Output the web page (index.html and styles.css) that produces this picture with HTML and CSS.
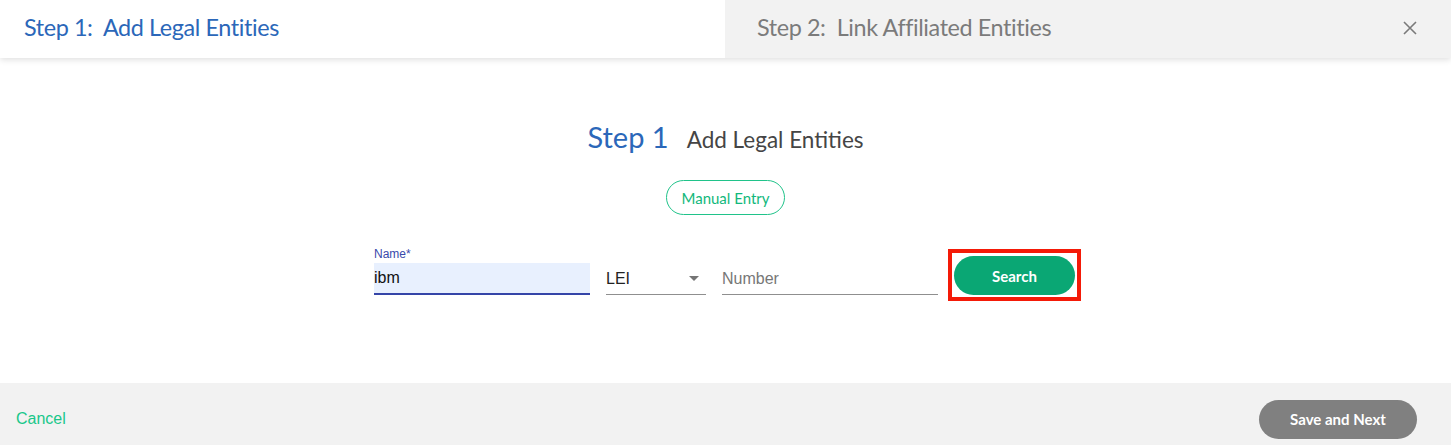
FILE: index.html
```html
<!DOCTYPE html>
<html>
<head>
<meta charset="utf-8">
<link rel="stylesheet" href="styles.css">
</head>
<body>
<div class="modal">
  <header class="tabs">
    <div class="tab tab-active">Step 1:&nbsp; Add Legal Entities</div>
    <div class="tab tab-inactive">
      <span>Step 2:&nbsp; Link Affiliated Entities</span>
      <svg class="close" width="16" height="16" viewBox="0 0 16 16"><path d="M2 2 L14 14 M14 2 L2 14" stroke="#7a7a7a" stroke-width="1.6" fill="none"/></svg>
    </div>
  </header>
  <main class="content">
    <h1 class="title"><span class="step">Step 1</span><span class="sub">Add Legal Entities</span></h1>
    <button class="manual">Manual Entry</button>
    <div class="form">
      <div class="field name-field">
        <label class="label">Name*</label>
        <div class="input filled">ibm</div>
      </div>
      <div class="field select-field">
        <div class="input select">LEI
          <svg class="caret" width="10" height="5" viewBox="0 0 10 5"><path d="M0 0 L10 0 L5 5 Z" fill="#757575"/></svg>
        </div>
      </div>
      <div class="field number-field">
        <div class="input placeholder">Number</div>
      </div>
      <div class="highlight">
        <button class="search">Search</button>
      </div>
    </div>
  </main>
  <footer class="footer">
    <a class="cancel">Cancel</a>
    <button class="save">Save and Next</button>
  </footer>
</div>
</body>
</html>
```
FILE: styles.css
```css
* { box-sizing: border-box; }
html, body { margin: 0; padding: 0; background: #fff; }
body { width: 1451px; height: 445px; overflow: hidden; font-family: "Lato", "Open Sans", sans-serif; }
.modal { display: flex; flex-direction: column; height: 445px; }
.tabs { display: flex; height: 58px; box-shadow: 0 2px 6px rgba(0,0,0,0.12); position: relative; z-index: 1; }
.tab { display: flex; align-items: center; font-size: 23.4px; letter-spacing: -0.4px; padding-bottom: 4px; }
.tab-active { width: 725px; flex: none; background: #fff; color: #2b67b9; padding-left: 24px; }
.tab-inactive { flex: 1; background: #f2f2f2; color: #7b7b7b; padding-left: 32px; padding-right: 33px; justify-content: space-between; }
.close { display: block; margin-top: 1px; }
.content { flex: 1; display: flex; flex-direction: column; align-items: center; padding-top: 61px; }
.title { margin: 0; display: flex; align-items: baseline; gap: 18px; font-weight: normal; }
.step { font-size: 29px; color: #2b67b9; }
.sub { font-size: 22.5px; color: #454545; }
.manual { margin-top: 26px; height: 35px; padding: 0 14px; border: 1px solid #20c38a; border-radius: 18px; background: #fff; color: #11b87c; font-family: "Lato", sans-serif; font-size: 15px; }
.form { display: flex; align-items: flex-end; gap: 16px; margin-top: 32px; margin-left: 4px; }
.field { display: flex; flex-direction: column; }
.label { font-family: "Liberation Sans", Arial, sans-serif; font-size: 12px; color: #3949ab; margin-bottom: 2px; }
.input { font-family: "Liberation Sans", Arial, sans-serif; font-size: 16px; height: 32px; display: flex; align-items: center; border-bottom: 1px solid #8f8f8f; }
.name-field .input { width: 216px; background: #e8f0fe; border-bottom: 2px solid #3545a8; color: #111; }
.select { width: 100px; justify-content: space-between; color: #222; }
.caret { margin-right: 7px; }
.number-field .input { width: 216px; color: #777; }
.highlight { border: 4px solid #f41a08; padding: 3px 2px 2px 2px; margin-left: -6px; margin-bottom: -6px; }
.search { display: block; width: 121px; height: 39px; border: none; border-radius: 20px; background: #0aa774; color: #fff; font-family: "Lato", sans-serif; font-size: 15px; font-weight: bold; }
.footer { height: 62px; background: #f2f2f2; display: flex; align-items: center; justify-content: space-between; padding: 0 34px 0 16px; }
.cancel { font-family: "Liberation Sans", Arial, sans-serif; font-size: 16px; color: #19c78a; margin-top: 9px; }
.save { width: 158px; height: 39px; margin-top: 10px; border: none; border-radius: 20px; background: #808080; color: #fff; font-family: "Lato", sans-serif; font-size: 15px; font-weight: bold; }
```
